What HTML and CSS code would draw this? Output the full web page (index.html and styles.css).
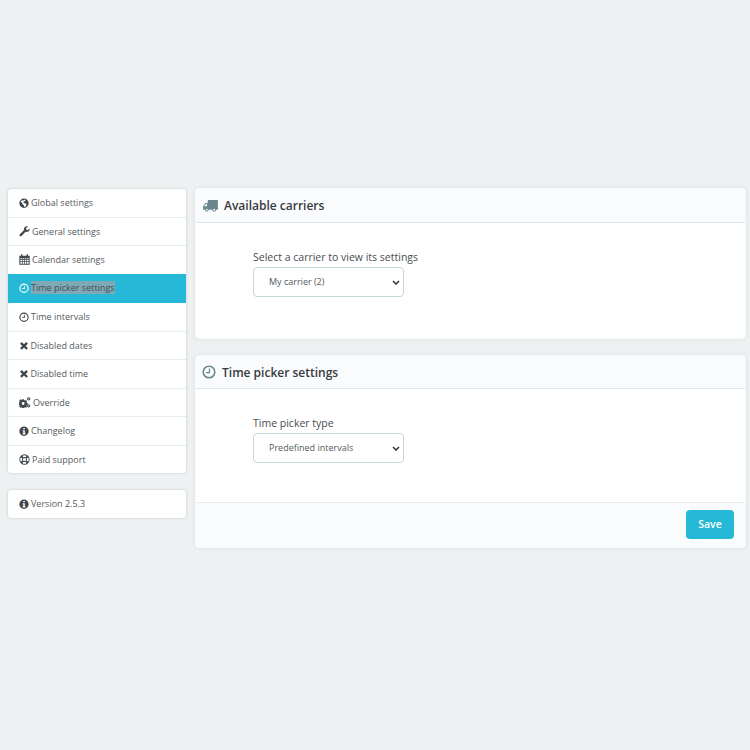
FILE: index.html
```html
<!DOCTYPE html>
<html lang="en">
<head>
<meta charset="utf-8">
<title>Time picker settings</title>
<link rel="stylesheet" href="styles.css">
</head>
<body>
<svg class="defs" width="0" height="0" aria-hidden="true">
  <symbol id="i-globe" viewBox="0 0 16 16"><path fill-rule="evenodd" d="M8 0.5a7.500 7.500 0 1 0 0 15a7.500 7.500 0 0 0 0-15zM3 4.500l2.500-1.500 2 .5 1.500-1.500 1.500 1-1 1.500-2 1-.5 1.500 2 1 2 .5 1 1.500-1.500 3-2 1-.5-2.500-2-1.500-.5-2-2-1.500z"/></symbol>
  <symbol id="i-wrench" viewBox="0 0 16 16"><path d="M15.500 4.200c0 2.500-2 4.500-4.500 4.500-.5 0-1-.1-1.400-.2l-6 6a1.700 1.700 0 0 1-2.400-2.400l6-6c-.2-.5-.2-.9-.2-1.400 0-2.500 2-4.500 4.500-4.500.7 0 1.300.2 1.900.4l-2.900 2.100v2.300l2 1.100 2.700-2.300c.2.100.3.300.3.400z"/></symbol>
  <symbol id="i-cal" viewBox="0 0 16 16"><path fill-rule="evenodd" d="M3 .5h2v2h6v-2h2v2h2.500v13H.5v-13H3zM2 6v1.800h2.300V6zM5.300 6v1.800h2.200V6zM8.500 6v1.800h2.200V6zM11.700 6v1.800H14V6zM2 8.800v1.800h2.300V8.800zM5.300 8.800v1.800h2.200V8.800zM8.500 8.800v1.800h2.200V8.800zM11.700 8.800v1.800H14V8.800zM2 11.600v2.400h2.300v-2.400zM5.300 11.600v2.400h2.200v-2.400zM8.500 11.600v2.400h2.200v-2.400zM11.700 11.600v2.400H14v-2.400z"/></symbol>
  <symbol id="i-clock" viewBox="0 0 16 16"><path fill-rule="evenodd" d="M8 .5a7.500 7.500 0 1 0 0 15a7.500 7.500 0 0 0 0-15zM8 2.300a5.700 5.700 0 1 1 0 11.400a5.700 5.700 0 0 1 0-11.400zM9.200 4H7.800v3.900H4.800v1.400h4.400z"/></symbol>
  <symbol id="i-x" viewBox="0 0 16 16"><path d="M4 1.800L8 5.800l4-4 3 3-4 4 4 4-2.800 2.800-4.200-4-4 4-3-3 4-3.800-4-4z"/></symbol>
  <symbol id="i-cogs" viewBox="0 0 18 16"><path fill-rule="evenodd" d="M5 3h2.400l.4 1.500 1.300.6 1.400-.8 1.600 1.700-.8 1.300.5 1.300 1.500.4v2.400l-1.500.4-.5 1.300.8 1.300-1.600 1.600-1.400-.8-1.300.5-.4 1.300H5l-.4-1.300-1.300-.5-1.400.8-1.600-1.600.8-1.300-.5-1.300-1.100-.4V8l1.100-.4.500-1.300-.8-1.300 1.600-1.700 1.400.8 1.300-.6zM6.200 7.300a2.200 2.200 0 1 0 0 4.400a2.200 2.200 0 0 0 0-4.400z"/><path fill-rule="evenodd" d="M14.500 0a2.500 2.500 0 1 1 0 5a2.500 2.500 0 0 1 0-5zM14.500 1.500a1 1 0 1 0 0 2a1 1 0 0 0 0-2zM14.500 10.500a2.500 2.500 0 1 1 0 5a2.500 2.500 0 0 1 0-5zM14.500 12a1 1 0 1 0 0 2a1 1 0 0 0 0-2z"/></symbol>
  <symbol id="i-info" viewBox="0 0 16 16"><path fill-rule="evenodd" d="M8 .5a7.500 7.500 0 1 0 0 15a7.500 7.500 0 0 0 0-15zM6.800 2.800h2.500v2.100H6.800zM5.900 6.200h3.400v5h1v1.800H5.900v-1.800h1v-3.200h-1z"/></symbol>
  <symbol id="i-life" viewBox="0 0 16 16"><path fill-rule="evenodd" d="M8 .5a7.500 7.500 0 1 0 0 15a7.500 7.500 0 0 0 0-15zM5.200 2.500a6 6 0 0 1 5.600 0L9.900 4.900a3.400 3.400 0 0 0-3.800 0zM2.500 5.200L4.900 6.100a3.400 3.400 0 0 0 0 3.800L2.500 10.800a6 6 0 0 1 0-5.600zM13.500 5.200a6 6 0 0 1 0 5.600l-2.400-.9a3.400 3.400 0 0 0 0-3.800zM6.100 11.100a3.400 3.400 0 0 0 3.800 0l.9 2.400a6 6 0 0 1-5.600 0zM8 5.700a2.300 2.300 0 1 1 0 4.600a2.300 2.300 0 0 1 0-4.600z"/></symbol>
  <symbol id="i-truck" viewBox="0 0 16 13"><path fill-rule="evenodd" d="M5.500 0H15.300q.7 0 .7.700V9.800q0 .7-.7.700H14a2 2 0 0 1-4 0H6a2 2 0 0 1-4 0H.7q-.7 0-.7-.7V6.500L2.500 3.200H5V.5q0-.5.500-.5zM4.300 4.300H3L1.300 6.300v.5h3zM4 9.500a1 1 0 1 0 0 2a1 1 0 0 0 0-2zM12 9.500a1 1 0 1 0 0 2a1 1 0 0 0 0-2z"/></symbol>
</svg>
<main class="layout">
  <aside class="sidebar">
    <nav class="menu">
      <a class="menu-item"><svg class="ico ico-md"><use href="#i-globe"/></svg><span>Global settings</span></a>
      <a class="menu-item"><svg class="ico ico-lg"><use href="#i-wrench"/></svg><span>General settings</span></a>
      <a class="menu-item"><svg class="ico ico-lg"><use href="#i-cal"/></svg><span>Calendar settings</span></a>
      <a class="menu-item active"><svg class="ico ico-md"><use href="#i-clock"/></svg><span class="selected-text">Time picker settings</span></a>
      <a class="menu-item"><svg class="ico ico-md"><use href="#i-clock"/></svg><span>Time intervals</span></a>
      <a class="menu-item"><svg class="ico ico-x"><use href="#i-x"/></svg><span>Disabled dates</span></a>
      <a class="menu-item"><svg class="ico ico-x"><use href="#i-x"/></svg><span>Disabled time</span></a>
      <a class="menu-item"><svg class="ico ico-wide"><use href="#i-cogs"/></svg><span>Override</span></a>
      <a class="menu-item"><svg class="ico ico-md"><use href="#i-info"/></svg><span>Changelog</span></a>
      <a class="menu-item"><svg class="ico ico-lg"><use href="#i-life"/></svg><span>Paid support</span></a>
    </nav>
    <div class="menu version">
      <div class="menu-item"><svg class="ico ico-md"><use href="#i-info"/></svg><span>Version 2.5.3</span></div>
    </div>
  </aside>
  <div class="content">
    <section class="panel panel-carriers">
      <header class="panel-head panel-head-tall"><svg class="head-ico truck"><use href="#i-truck"/></svg><h2>Available carriers</h2></header>
      <div class="panel-body">
        <label class="field-label" for="carrier">Select a carrier to view its settings</label>
        <select class="field" id="carrier"><option>My carrier (2)</option></select>
      </div>
    </section>
    <section class="panel">
      <header class="panel-head"><svg class="head-ico clock"><use href="#i-clock"/></svg><h2>Time picker settings</h2></header>
      <div class="panel-body">
        <label class="field-label" for="type">Time picker type</label>
        <select class="field" id="type"><option>Predefined intervals</option></select>
      </div>
      <footer class="panel-foot"><button class="save" type="button">Save</button></footer>
    </section>
  </div>
</main>
</body>
</html>
```
FILE: styles.css
```css
* { box-sizing: border-box; }
html, body { margin: 0; height: 100%; }
body {
  background: #eef1f2;
  font-family: "Open Sans", "Liberation Sans", sans-serif;
  color: #363a41;
}
.defs { display: block; height: 0; }
.layout {
  display: flex;
  gap: 8px;
  padding: 188px 4px 0 7px;
  align-items: flex-start;
}
.sidebar { width: 180px; flex: none; display: flex; flex-direction: column; gap: 15px; }
.menu {
  background: #fff;
  border: 1px solid #dfe3e6;
  border-radius: 4px;
  overflow: hidden;
  box-shadow: 0 0 3px rgba(0, 0, 0, .05);
}
.menu-item {
  display: flex;
  align-items: center;
  gap: 2px;
  height: 28.5px;
  padding-left: 11px;
  font-size: 9px;
  color: #555a60;
  border-bottom: 1px solid #e8ebed;
  white-space: nowrap;
}
.menu-item:last-child { border-bottom: 0; height: 27.500px; }
.ico { fill: #42474d; flex: none; height: 10px; }
.ico-md { width: 10px; height: 10.500px; }
.ico-lg { width: 11px; height: 11px; }
.ico-x { width: 10px; height: 9px; margin-right: -.5px; }
.ico-wide { width: 12px; height: 11px; }
.menu-item.active { background: #25b9d7; border-bottom-color: #25b9d7; margin: -1px -1px 0; padding-left: 12px; height: 29.500px; }
.menu-item.active .ico { fill: #fff; }
.selected-text { background: #7fa9b6; color: #3f5058; line-height: 13px; }
.version .menu-item { height: 27.500px; }
.content { flex: 1; display: flex; flex-direction: column; gap: 16px; min-width: 0; }
.panel {
  background: #fff;
  border: 1px solid #f7f9fa;
  border-radius: 4px;
  box-shadow: 0 0 4px rgba(0, 0, 0, .07);
}
.panel-carriers { height: 151px; }
.panel-head {
  display: flex;
  align-items: center;
  height: 33px;
  padding-left: 7px;
  background: #fafbfc;
  border-bottom: 1px solid #dfe6e9;
  gap: 6px;
}
.panel-head-tall { height: 34px; }
.panel-head h2 { margin: 0; font-size: 12px; font-weight: 600; color: #363a41; }
.head-ico { fill: #6c868e; flex: none; }
.head-ico.truck { width: 15px; height: 12px; }
.head-ico.clock { width: 14px; height: 14px; margin-left: -1px; }
.panel-body { padding: 27px 0 0 57px; display: flex; flex-direction: column; align-items: flex-start; height: 113px; }
.field-label { font-size: 10.500px; line-height: 15px; color: #484d52; margin-bottom: 2px; }
.field {
  appearance: none;
  width: 151px;
  height: 30px;
  padding: 0 0 2px 15px;
  font-family: inherit;
  font-size: 9px;
  color: #555a60;
  background: #fff url("data:image/svg+xml,%3Csvg xmlns='http://www.w3.org/2000/svg' width='8' height='5'%3E%3Cpath d='M1 1l3 3 3-3' fill='none' stroke='%23363a41' stroke-width='1.600'/%3E%3C/svg%3E") no-repeat right 3px center;
  border: 1px solid #c5d5d9;
  border-radius: 4px;
}
.panel-foot {
  display: flex;
  justify-content: flex-end;
  align-items: center;
  height: 45px;
  padding: 0 11px 2px 0;
  background: #fafbfc;
  border-top: 1px solid #e9eef0;
}
.save {
  width: 48px;
  height: 29px;
  border: 0;
  border-radius: 4px;
  background: #25b9d7;
  color: #fff;
  font-family: inherit;
  font-size: 10.500px;
  font-weight: 600;
}
```
